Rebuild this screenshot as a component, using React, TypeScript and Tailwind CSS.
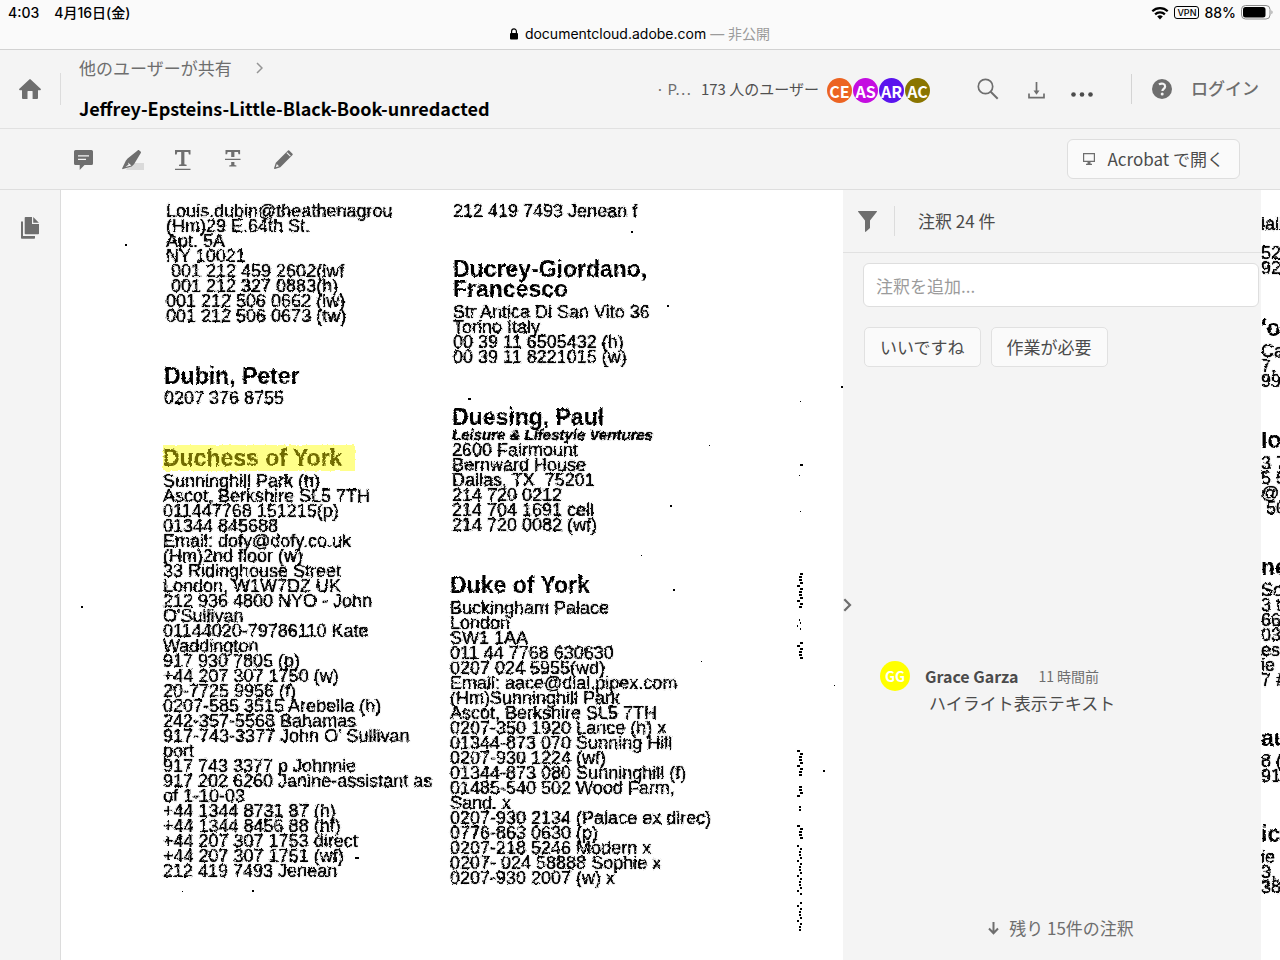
import type { ReactNode } from "react";

type Entry = {
  name?: string[];
  tagline?: string;
  highlight?: boolean;
  lines: string[];
  className: string;
  nameClassName?: string;
};

const leftColumn: Entry[] = [
  {
    className: "pl-[3px]",
    lines: [
      "Louis.dubin@theathenagrou",
      "(Hm)29 E.64th St.",
      "Apt. 5A",
      "NY 10021",
      "\u00a0001 212 459 2602(lwf",
      "\u00a0001 212 327 0883(h)",
      "001 212 506 0662 (lw)",
      "001 212 506 0673 (tw)",
    ],
  },
  {
    className: "mt-[42px] pl-[1px]",
    nameClassName: "pb-[5px]",
    name: ["Dubin, Peter"],
    lines: ["0207 376 8755"],
  },
  {
    className: "mt-[42px]",
    nameClassName: "pb-[6px]",
    name: ["Duchess of York"],
    highlight: true,
    lines: [
      "Sunninghill Park (h)",
      "Ascot, Berkshire SL5 7TH",
      "011447768 151215(p)",
      "01344 845688",
      "Email: dofy@dofy.co.uk",
      "(Hm)2nd floor (w)",
      "33 Ridinghouse Street",
      "London, W1W7DZ UK",
      "212 936 4800 NYO - John",
      "O'Sullivan",
      "01144020-79786110 Kate",
      "Waddington",
      "917 930 7805 (p)",
      "+44 207 307 1750 (w)",
      "20-7725 9956 (f)",
      "0207-585 3515 Arebella (h)",
      "242-357-5568 Bahamas",
      "917-743-3377 John O' Sullivan",
      "port",
      "917 743 3377 p Johnnie",
      "917 202 6260 Janine-assistant as",
      "of 1-10-03",
      "+44 1344 8731 87 (h)",
      "+44 1344 8456 88 (hf)",
      "+44 207 307 1753 direct",
      "+44 207 307 1751 (wf)",
      "212 419 7493 Jenean",
    ],
  },
];

const rightColumn: Entry[] = [
  { className: "pl-[3px]", lines: ["212 419 7493 Jenean f"] },
  {
    className: "mt-10 pl-[3px]",
    nameClassName: "pb-[6px]",
    name: ["Ducrey-Giordano,", "Francesco"],
    lines: ["Str Antica Di San Vito 36", "Torino Italy", "00 39 11 6505432 (h)", "00 39 11 8221015 (w)"],
  },
  {
    className: "mt-[42px] pl-[2px]",
    name: ["Duesing, Paul"],
    tagline: "Leisure & Lifestyle Ventures",
    lines: ["2600 Fairmount", "Bernward House", "Dallas, TX\u00a0 75201", "214 720 0212", "214 704 1691 cell", "214 720 0082 (wf)"],
  },
  {
    className: "mt-[42px]",
    nameClassName: "pb-[6px]",
    name: ["Duke of York"],
    lines: [
      "Buckingham Palace",
      "London",
      "SW1 1AA",
      "011 44 7768 630630",
      "0207 024 5955(wd)",
      "Email: aace@dial.pipex.com",
      "(Hm)Sunninghill Park",
      "Ascot, Berkshire SL5 7TH",
      "0207-350 1920 Lance (h) x",
      "01344-873 070 Sunning Hill",
      "0207-930 1224 (wf)",
      "01344-873 080 Sunninghill (f)",
      "01485-540 502 Wood Farm,",
      "Sand. x",
      "0207-930 2134 (Palace ex direc)",
      "0776-863 0630 (p)",
      "0207-218 5246 Modern x",
      "0207- 024 58888 Sophie x",
      "0207-930 2007 (w) x",
    ],
  },
];

const nextPage: Entry[] = [
  { className: "pt-[13px]", lines: ["iali"] },
  { className: "mt-[14px]", lines: ["52", "92"] },
  { className: "mt-[42px]", nameClassName: "pb-[6px]", name: ["'ol"], lines: ["Ca", " 7,", "993"] },
  { className: "mt-[41px]", nameClassName: "pb-[6px]", name: ["Io"], lines: ["3 7", "5 5", "@", "\u00a050"] },
  { className: "mt-[41px]", nameClassName: "pb-[6px]", name: ["ne"], lines: ["So", "3 t", "66", "03", "es", "ie", "7 #"] },
  { className: "mt-10", nameClassName: "pb-[6px]", name: ["au"], lines: ["8 (", "911"] },
  { className: "mt-10", nameClassName: "pb-[6px]", name: ["ici"], lines: ["ie", "3,", "38"] },
];

function EntryBlock({ entry }: { entry: Entry }) {
  return (
    <section className={entry.className}>
      {entry.name && (
        <h2 className={`text-[23px] leading-5 font-bold [text-shadow:none] ${entry.nameClassName ?? ""}`}>
          {entry.name.map((part) =>
            entry.highlight ? (
              <mark key={part} className="-my-[3px] inline-block bg-[#ffff8a] py-[3px] pr-[13px] text-[#6f6a00]">
                {part}
              </mark>
            ) : (
              <span key={part} className="block">
                {part}
              </span>
            ),
          )}
        </h2>
      )}
      {entry.tagline && <p className="text-[15px] leading-4 font-bold italic">{entry.tagline}</p>}
      {entry.lines.map((line, i) => (
        <p key={i}>{line}</p>
      ))}
    </section>
  );
}

const specks: [number, number, number][] = [
  [64, 54, 2], [570, 41, 2], [606, 115, 2], [407, 208, 3], [20, 416, 2], [780, 196, 2], [739, 211, 1], [739, 274, 3],
  [609, 315, 2], [648, 255, 1], [640, 471, 1], [580, 365, 1], [612, 399, 2], [762, 580, 2], [191, 700, 2], [121, 701, 1],
  [294, 667, 4], [738, 285, 1], [739, 321, 1], [773, 495, 1],
];

const edgeRuns: [number, number][] = [
  [383, 418], [429, 440], [452, 470], [560, 585], [596, 606], [616, 622], [635, 648], [655, 704], [712, 740],
];

function ScanNoise() {
  const marks: ReactNode[] = [];
  edgeRuns.forEach(([from, to]) => {
    for (let y = from; y < to; y += 3) {
      marks.push(<rect key={`e${y}`} x={736 + ((y * y * 7) % 5)} y={y} width={1 + (y % 3)} height={2} />);
    }
  });
  return (
    <svg className="pointer-events-none absolute top-0 left-0" width="782" height="770" viewBox="0 0 782 770" aria-hidden="true">
      <defs>
        <filter id="scan-edge" x="0" y="0" width="100%" height="100%">
          <feTurbulence type="fractalNoise" baseFrequency="0.35" numOctaves="2" seed="4" result="grain" />
          <feDisplacementMap in="SourceGraphic" in2="grain" scale="3" xChannelSelector="R" yChannelSelector="G" />
        </filter>
      </defs>
      {specks.map(([x, y, w]) => (
        <rect key={`${x}-${y}`} x={x} y={y} width={w} height={w > 1 ? 2 : 1} />
      ))}
      {marks}
    </svg>
  );
}

function Avatar({ initials, className }: { initials: string; className: string }) {
  return <span className={`flex items-center justify-center rounded-full font-bold text-white ${className}`}>{initials}</span>;
}

function StatusBar() {
  return (
    <div className="h-[50px] shrink-0 border-b border-[#d2d2d2] bg-[#fafafa] font-['Inter','Noto_Sans_CJK_JP',sans-serif] text-black">
      <div className="flex h-[25px] items-center justify-between pr-[7px] pl-2 text-[14px] leading-5 font-medium">
        <div className="flex gap-[15px]">
          <span>4:03</span>
          <span>4月16日(金)</span>
        </div>
        <div className="flex items-center gap-[5px]">
          <svg width="18" height="14" viewBox="0 0 18 14" fill="none" stroke="black" strokeWidth="2.2" aria-label="Wi-Fi">
            <path d="M1.3 5.3a11 11 0 0 1 15.4 0M4.1 8.4a7 7 0 0 1 9.8 0" />
            <path d="M9 13.4 6.2 10.6a4 4 0 0 1 5.6 0Z" fill="black" stroke="none" />
          </svg>
          <span className="flex h-[13px] w-[25px] items-center justify-center rounded-[3px] border border-black text-[9px] leading-none font-medium">
            VPN
          </span>
          <span>88%</span>
          <svg width="32" height="15" viewBox="0 0 32 15" aria-label="Battery">
            <rect x="0.5" y="0.5" width="28.5" height="13.5" rx="4" fill="none" stroke="#8a8a8a" />
            <rect x="2" y="2" width="22.5" height="10.5" rx="2.5" />
            <path d="M30.5 5.2c1.3.5 1.3 3.6 0 4.1z" fill="#8a8a8a" />
          </svg>
        </div>
      </div>
      <div className="flex h-[18px] items-center justify-center gap-[7px] text-[14px] leading-[18px]">
        <svg width="8" height="12" viewBox="0 0 8 12" aria-hidden="true">
          <rect x="0" y="5" width="8" height="6.5" rx="1" />
          <path d="M1.6 5.5V3.3a2.4 2.4 0 0 1 4.8 0v2.200" fill="none" stroke="black" strokeWidth="1.2" />
        </svg>
        <span>
          documentcloud.adobe.com <span className="text-[#9b9b9b]">— 非公開</span>
        </span>
      </div>
    </div>
  );
}

function Header() {
  return (
    <header className="flex h-[79px] shrink-0 items-center border-b border-[#e1e1e1] text-[#6e6e6e]">
      <a href="#home" aria-label="ホーム" className="flex w-[60px] justify-center">
        <svg width="22" height="20" viewBox="0 0 22 20" fill="currentColor">
          <path d="M10.3.4a1 1 0 0 1 1.4 0L21.6 9.8c.6.6.2 1.4-.5 1.4H19V19a1 1 0 0 1-1 1h-4.4v-7.5a.5.5 0 0 0-.5-.5H9a.5.5 0 0 0-.5.5V20H4a1 1 0 0 1-1-1v-7.8H.9c-.7 0-1.1-.8-.5-1.4Z" />
        </svg>
      </a>
      <div className="h-8 border-l border-[#dcdcdc]" />
      <div className="flex flex-col gap-4 pb-[2px] pl-[18px]">
        <nav className="flex items-center gap-6 text-[17px] leading-6">
          <a href="#shared">他のユーザーが共有</a>
          <svg width="7" height="12" viewBox="0 0 7 12" fill="none" stroke="#959595" strokeWidth="1.5" aria-hidden="true">
            <path d="m1 1 5 5-5 5" />
          </svg>
        </nav>
        <h1 className="text-[18px] leading-6 font-bold text-black">Jeffrey-Epsteins-Little-Black-Book-unredacted</h1>
      </div>
      <div className="ml-auto flex items-center">
        <span className="text-[15px] leading-6">· P⋯</span>
        <span className="pr-2 pl-[10px] text-[15px] leading-6 text-[#505050]">173 人のユーザー</span>
        <div className="flex gap-px pt-[3px] text-[16px] leading-none">
          <Avatar initials="CE" className="size-[25px] bg-[#ec6422]" />
          <Avatar initials="AS" className="size-[25px] bg-[#c40de0]" />
          <Avatar initials="AR" className="size-[25px] bg-[#5a14ee]" />
          <Avatar initials="AC" className="size-[25px] bg-[#8a7500]" />
        </div>
        <button type="button" aria-label="検索" className="ml-[47px]">
          <svg width="22" height="22" viewBox="0 0 22 22" fill="none" stroke="currentColor" strokeWidth="1.7">
            <circle cx="8.5" cy="8.5" r="7.2" />
            <path d="m13.7 13.7 7 7" strokeWidth="2" />
          </svg>
        </button>
        <button type="button" aria-label="ダウンロード" className="ml-[29px] pt-[2px]">
          <svg width="17" height="17" viewBox="0 0 17 17" fill="none" stroke="currentColor" strokeWidth="1.7">
            <path d="M1 11.5v4.2h15v-4.2M8.5 0v10" />
            <path d="m5.5 8.500 3 4.200 3-4.200z" fill="currentColor" stroke="none" />
          </svg>
        </button>
        <button type="button" aria-label="その他" className="ml-[26px] pt-[11px] text-[#4b4b4b]">
          <svg width="22" height="5" viewBox="0 0 22 5" fill="currentColor">
            <circle cx="2.5" cy="2.5" r="2.3" />
            <circle cx="11" cy="2.5" r="2.3" />
            <circle cx="19.5" cy="2.5" r="2.3" />
          </svg>
        </button>
        <div className="ml-[38px] h-[30px] border-l border-[#d4d4d4]" />
        <button type="button" aria-label="ヘルプ" className="ml-5">
          <svg width="20" height="20" viewBox="0 0 20 20">
            <circle cx="10" cy="10" r="10" fill="#6e6e6e" />
            <path d="M6.9 5.4c3-1.7 6.2-.6 6.2 2 0 2.3-2.7 2.6-2.7 4.600" fill="none" stroke="#f4f4f4" strokeWidth="2.2" />
            <circle cx="10.2" cy="15" r="1.5" fill="#f4f4f4" />
          </svg>
        </button>
        <a href="#login" className="pr-[21px] pb-[2px] pl-[19px] text-[17px] leading-6 font-medium">
          ログイン
        </a>
      </div>
    </header>
  );
}

function Toolbar() {
  return (
    <div className="flex h-[61px] shrink-0 items-center justify-between border-b border-[#dedede] pr-10 pl-[72px] text-[#6e6e6e]">
      <div className="flex items-center gap-7 pt-px">
        <button type="button" aria-label="注釈" className="flex size-[22px] items-center justify-center">
          <svg width="19" height="20" viewBox="0 0 19 20">
            <path d="M1.500 0h16A1.500 1.500 0 0 1 19 1.500v12a1.500 1.500 0 0 1-1.500 1.500h-7L5.700 20v-5H1.500A1.500 1.500 0 0 1 0 13.500v-12A1.500 1.500 0 0 1 1.500 0Z" fill="currentColor" />
            <path d="M4 5.800h11M4 9.300h8" stroke="#f4f4f4" strokeWidth="1.3" />
          </svg>
        </button>
        <button type="button" aria-label="ハイライト" className="flex size-[22px] items-center justify-center">
          <svg width="22" height="20" viewBox="0 0 22 20">
            <path d="M7 13h15v7H4z" fill="#dadada" />
            <path d="M15.6.4c.6-.5 1.2-.4 1.7 0l1.3 1.1c.5.4.5 1 .2 1.5L12 14.200l-2.400 2.300-8.600 2.600c-.6.2-1-.3-.8-.8l3.600-7.500 1.800-2.400Z" fill="currentColor" />
            <path d="M6 12.400 9.400 15.400 3.400 17l3.200-2.600z" fill="#f4f4f4" />
          </svg>
        </button>
        <button type="button" aria-label="下線" className="flex size-[22px] items-center justify-center">
          <svg width="16" height="20" viewBox="0 0 16 20" fill="currentColor">
            <path d="M0 0h15.500v4.600h-1.600L13.300 2H9.400v12.300l2.200.5V16H4v-1.200l2.200-.5V2H2.300L1.600 4.600H0ZM0 18.700h15.500V20H0Z" />
          </svg>
        </button>
        <button type="button" aria-label="取り消し線" className="flex size-[22px] items-center justify-center">
          <svg width="16" height="20" viewBox="0 0 16 20" fill="currentColor">
            <path d="M.5 0h14.600v4.200h-1.600L13 2H9.400v5H6.200V2H2.600l-.5 2.200H.5ZM0 8.700h15.500V10H0ZM6.200 12h3.200v3l2 .5v1H4.200v-1l2-.5Z" />
          </svg>
        </button>
        <button type="button" aria-label="描画" className="flex size-[22px] items-center justify-center">
          <svg width="19" height="19" viewBox="0 0 19 19">
            <path d="m15.200.4 3.300 3.300c.4.4.4.9 0 1.300L6.300 17.200.9 18.900c-.6.2-1-.3-.8-.8l1.700-5.400L14 .4a.9.9 0 0 1 1.200 0Z" fill="currentColor" />
            <path d="m12.800 2.600 3.600 3.600" stroke="#f4f4f4" strokeWidth="1.1" />
            <path d="m2.800 14-1 3.200L5 16.200Z" fill="#f4f4f4" />
          </svg>
        </button>
      </div>
      <button type="button" className="flex h-10 items-center gap-[13px] rounded-md border border-[#dedede] bg-[#fafafa] px-[15px] text-[17px] leading-6 text-[#4b4b4b]">
        <svg width="12" height="12" viewBox="0 0 12 12" fill="none" stroke="#6e6e6e" aria-hidden="true">
          <path d="M.6.7h10.800v7.600H.6zM3 11.300h6" strokeWidth="1.2" />
          <path d="M4.500 8.500h3v3h-3z" fill="#6e6e6e" stroke="none" />
        </svg>
        Acrobat で開く
      </button>
    </div>
  );
}

function CommentsPanel() {
  return (
    <aside aria-label="注釈" className="relative flex w-[418px] shrink-0 flex-col bg-[#f4f4f4] text-[#4b4b4b]">
      <div className="flex h-[63px] shrink-0 items-center border-b border-[#e1e1e1] pl-[15px]">
        <button type="button" aria-label="フィルター" className="text-[#6e6e6e]">
          <svg width="19" height="21" viewBox="0 0 19 21" fill="currentColor">
            <path d="M.4 0h18.200c.4 0 .5.5.3.8L12 9.500V17l-4.200 3.800c-.3.2-.8 0-.8-.4V9.500L.1.800C-.1.5 0 0 .4 0Z" />
          </svg>
        </button>
        <div className="ml-[17px] h-[30px] border-l border-[#dcdcdc]" />
        <h2 className="pl-[23px] text-[17px] leading-6">注釈 24 件</h2>
      </div>
      <div className="flex flex-col gap-5 pt-[10px] pr-[2px] pl-5">
        <input
          type="text"
          aria-label="注釈を追加"
          placeholder="注釈を追加..."
          className="h-11 w-full rounded-md border border-[#dedede] bg-white px-3 text-[17px] placeholder:text-[#9b9b9b]"
        />
        <div className="flex gap-[10px] pl-px text-[17px] leading-6">
          <button type="button" className="h-10 rounded-[5px] border border-[#e1e1e1] bg-[#fafafa] px-[15px]">
            いいですね
          </button>
          <button type="button" className="h-10 rounded-[5px] border border-[#e1e1e1] bg-[#fafafa] px-[15px]">
            作業が必要
          </button>
        </div>
      </div>
      <button type="button" aria-label="パネルを閉じる" className="absolute top-[53%] left-0 text-[#6e6e6e]">
        <svg width="9" height="14" viewBox="0 0 9 14" fill="none" stroke="currentColor" strokeWidth="2.2">
          <path d="m1.3 1.3 5.700 5.700-5.700 5.700" />
        </svg>
      </button>
      <article className="mt-auto flex gap-[15px] pl-[37px]">
        <Avatar initials="GG" className="size-[30px] bg-[#ffff00] text-[14px] leading-none" />
        <div className="pt-[3px]">
          <div className="flex items-center gap-5 leading-6">
            <h3 className="text-[16px] font-bold">Grace Garza</h3>
            <time className="text-[14px] text-[#6e6e6e]">11 時間前</time>
          </div>
          <p className="pt-[3px] pl-1 text-[17px] leading-6">ハイライト表示テキスト</p>
        </div>
      </article>
      <button type="button" className="mt-[201px] mb-5 flex items-center justify-center gap-[10px] pl-[18px] text-[17px] leading-6 text-[#6e6e6e]">
        <svg width="11" height="13" viewBox="0 0 11 13" fill="none" stroke="currentColor" strokeWidth="2" aria-hidden="true">
          <path d="M5.500 0v11M1 6.500l4.500 4.700L10 6.500" />
        </svg>
        残り 15件の注釈
      </button>
    </aside>
  );
}

export default function App() {
  return (
    <div className="flex h-screen flex-col overflow-hidden bg-[#f4f4f4] font-['Noto_Sans_CJK_JP',sans-serif]">
      <StatusBar />
      <Header />
      <Toolbar />
      <main className="flex min-h-0 flex-1">
        <nav className="w-[61px] shrink-0 border-r border-[#dcdcdc] pt-[27px] pl-[21px]">
          <button type="button" aria-label="ページサムネール" className="text-[#6e6e6e]">
            <svg width="18" height="22" viewBox="0 0 18 22" fill="currentColor">
              <path d="M4.500 0H11v7h7v9.500a.8.8 0 0 1-.8.800H4.500a.8.8 0 0 1-.8-.8V.8a.8.8 0 0 1 .8-.8ZM12.200 0l5.700 5.800h-5.700ZM0 4.500h2V19h12v2a.8.8 0 0 1-.8.800H.8A.8.8 0 0 1 0 21Z" />
            </svg>
          </button>
        </nav>
        <div className="relative flex-1 overflow-hidden bg-white">
          <div className="flex pt-[14px] pb-6 pl-[102px] font-['Liberation_Sans',sans-serif] text-[18px] leading-[15px] whitespace-nowrap text-black [filter:url(#scan-edge)] [text-shadow:0_0_1px_#000]">
            <div className="w-[287px] shrink-0">
              {leftColumn.map((entry, i) => (
                <EntryBlock key={i} entry={entry} />
              ))}
            </div>
            <div className="shrink-0">
              {rightColumn.map((entry, i) => (
                <EntryBlock key={i} entry={entry} />
              ))}
            </div>
          </div>
          <ScanNoise />
        </div>
        <CommentsPanel />
        <div className="w-[19px] shrink-0 overflow-hidden bg-white">
          <div className="pt-[14px] font-['Liberation_Sans',sans-serif] text-[18px] leading-[15px] whitespace-nowrap text-black [filter:url(#scan-edge)] [text-shadow:0_0_1px_#000]">
            {nextPage.map((entry, i) => (
              <EntryBlock key={i} entry={entry} />
            ))}
          </div>
        </div>
      </main>
    </div>
  );
}
